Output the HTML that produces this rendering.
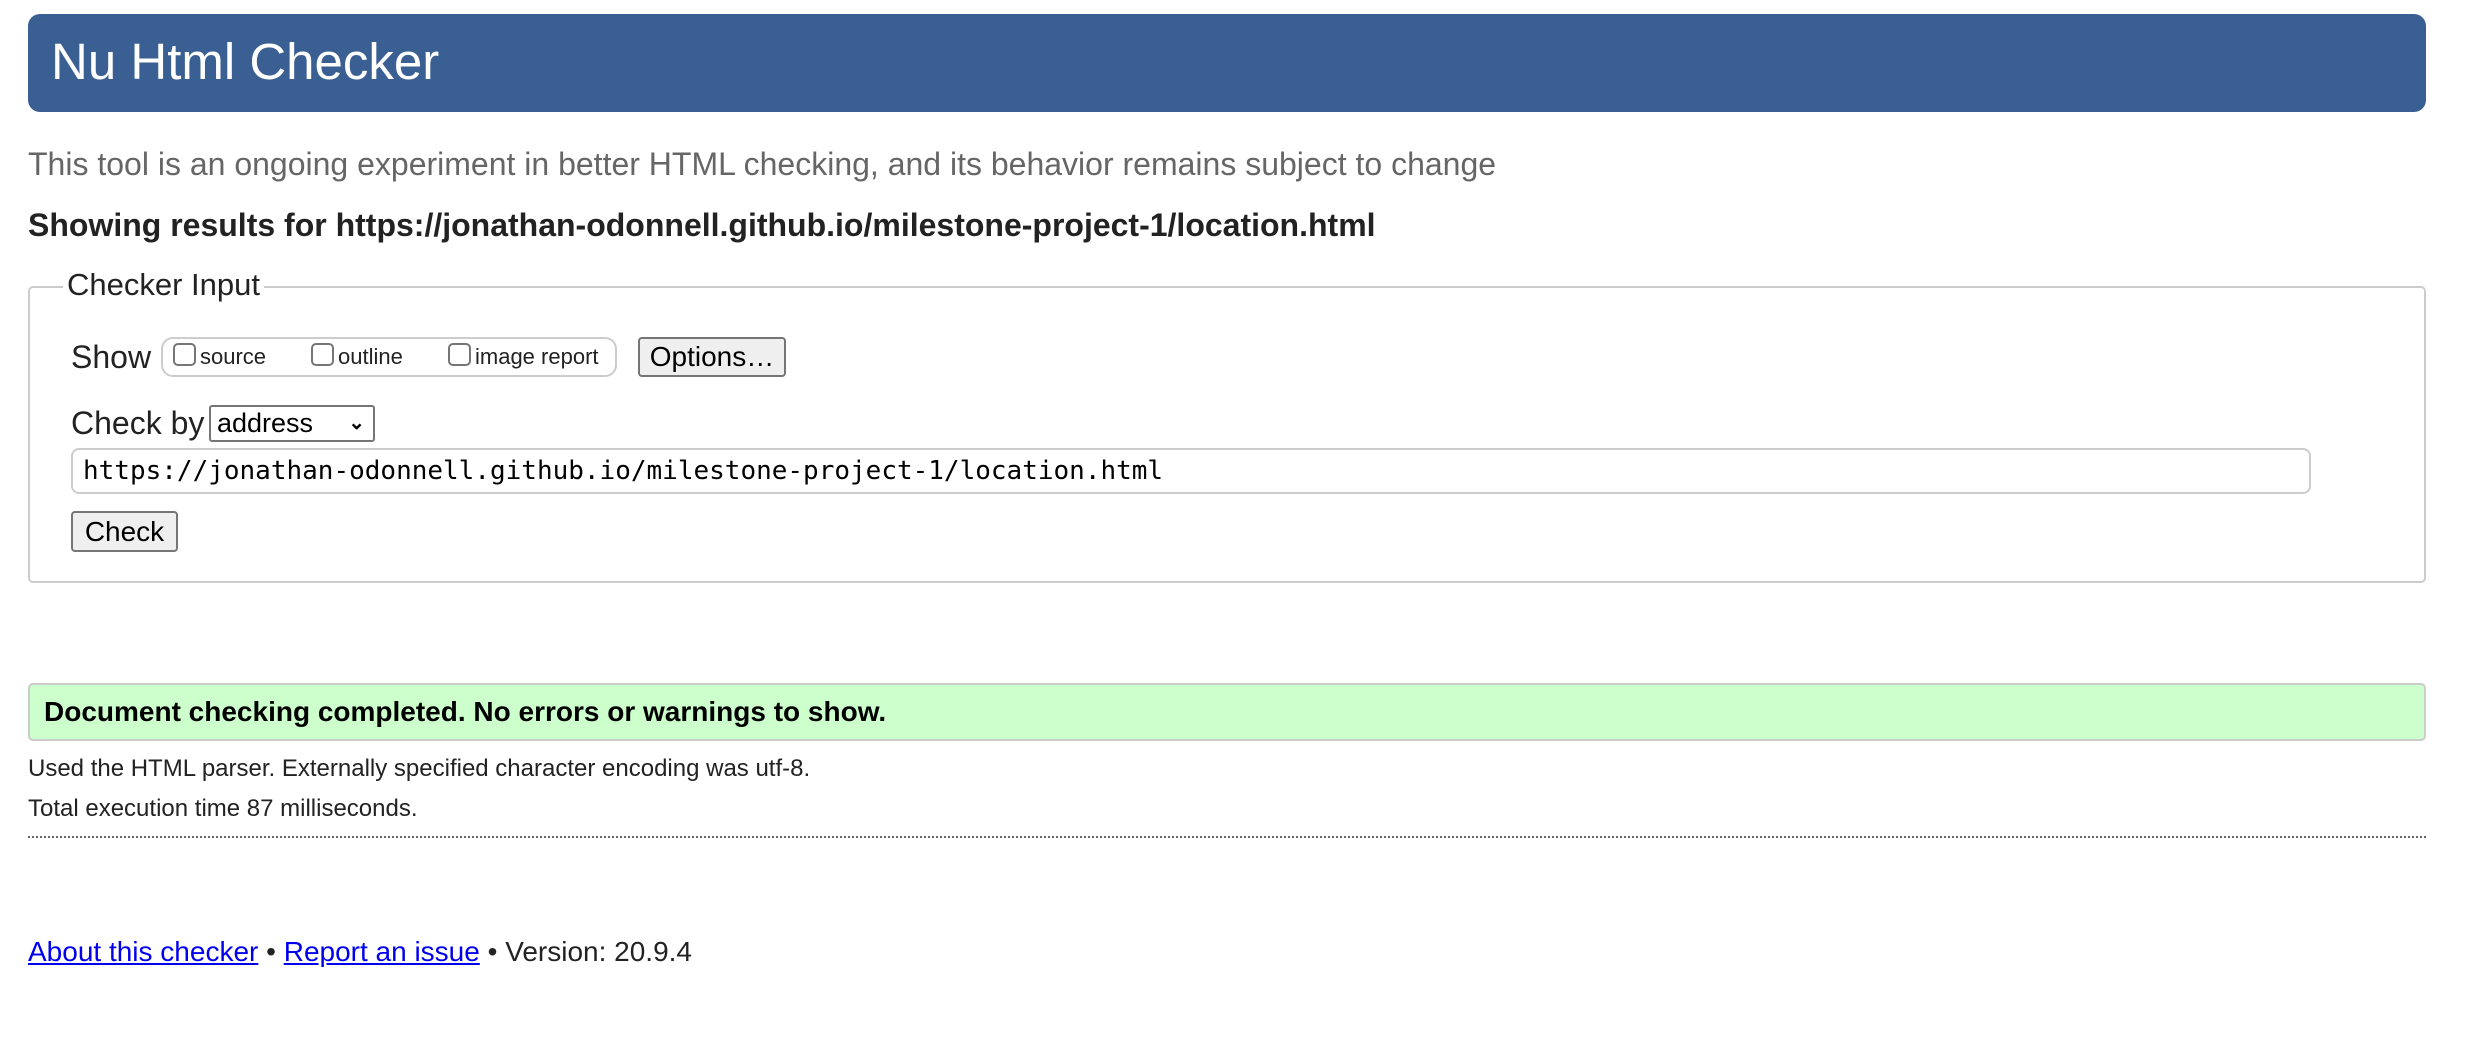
<!DOCTYPE html>
<html><head><meta charset="utf-8"><style>
body{margin:0;width:2470px;height:1050px;background:#fff;font-family:"Liberation Sans",sans-serif;color:#000;position:relative;overflow:hidden}
.a{position:absolute;white-space:nowrap}
#hd{left:28px;top:14px;width:2398px;height:98px;background:#3a5f93;border-radius:12px}
#hd span{position:absolute;left:23px;top:18px;color:#fff;font-size:51px;line-height:60px}
.cb{display:inline-block;width:23px;height:23px;border:2px solid #767676;border-radius:5px;box-sizing:border-box;vertical-align:-2px;margin-right:4px;background:#fff}
.btn{background:#efefef;border:2px solid #767676;border-radius:4px;box-sizing:border-box;font-size:28px;text-align:center}
</style></head><body>
<div class="a" id="hd"><span>Nu Html Checker</span></div>
<div class="a" style="left:28px;top:146px;font-size:32px;color:#666">This tool is an ongoing experiment in better HTML checking, and its behavior remains subject to change</div>
<div class="a" style="left:28px;top:207px;font-size:32px;font-weight:bold;color:#222">Showing results for https://jonathan-odonnell.github.io/milestone-project-1/location.html</div>
<div class="a" style="left:28px;top:286px;width:2398px;height:297px;border:2px solid #ccc;border-radius:5px;box-sizing:border-box"></div>
<div class="a" style="left:63px;top:267px;padding:0 4px;background:#fff;font-size:31px;color:#222">Checker Input</div>
<div class="a" style="left:71px;top:337px;font-size:32px;line-height:40px;color:#222">Show</div>
<div class="a" style="left:161px;top:337px;width:456px;height:40px;border:2px solid #ccc;border-radius:12px;box-sizing:border-box"></div>
<div class="a" style="left:173px;top:340px;font-size:22px;line-height:34px;color:#222"><span class="cb"></span>source</div>
<div class="a" style="left:311px;top:340px;font-size:22px;line-height:34px;color:#222"><span class="cb"></span>outline</div>
<div class="a" style="left:448px;top:340px;font-size:22px;line-height:34px;color:#222"><span class="cb"></span>image report</div>
<div class="a btn" style="left:638px;top:337px;width:148px;height:40px;line-height:36px">Options…</div>
<div class="a" style="left:71px;top:403px;font-size:32px;line-height:40px;color:#222">Check by</div>
<div class="a" style="left:209px;top:405px;width:166px;height:37px;border:2px solid #767676;border-radius:3px;box-sizing:border-box;font-size:27px;line-height:33px;padding-left:6px">address<span style="position:absolute;right:8px;top:0;font-size:20px;font-weight:bold">&#8964;</span></div>
<div class="a" style="left:71px;top:448px;width:2240px;height:46px;border:2px solid #ccc;border-radius:8px;box-sizing:border-box;font-family:'DejaVu Sans Mono','Liberation Mono',monospace;font-size:26px;line-height:42px;padding-left:10px">https://jonathan-odonnell.github.io/milestone-project-1/location.html</div>
<div class="a btn" style="left:71px;top:511px;width:107px;height:41px;line-height:37px">Check</div>
<div class="a" style="left:28px;top:683px;width:2398px;height:58px;background:#ccffcc;border:2px solid #ccc;border-radius:5px;box-sizing:border-box"></div>
<div class="a" style="left:44px;top:696px;font-size:28px;font-weight:bold">Document checking completed. No errors or warnings to show.</div>
<div class="a" style="left:28px;top:755px;font-size:24px;color:#222">Used the HTML parser. Externally specified character encoding was utf-8.</div>
<div class="a" style="left:28px;top:795px;font-size:24px;color:#222">Total execution time 87 milliseconds.</div>
<div class="a" style="left:28px;top:836px;width:2398px;border-top:2px dotted #666"></div>
<div class="a" style="left:28px;top:936px;font-size:28px;color:#222"><span style="color:#00e;text-decoration:underline">About this checker</span> • <span style="color:#00e;text-decoration:underline">Report an issue</span> • Version: 20.9.4</div>
</body></html>
